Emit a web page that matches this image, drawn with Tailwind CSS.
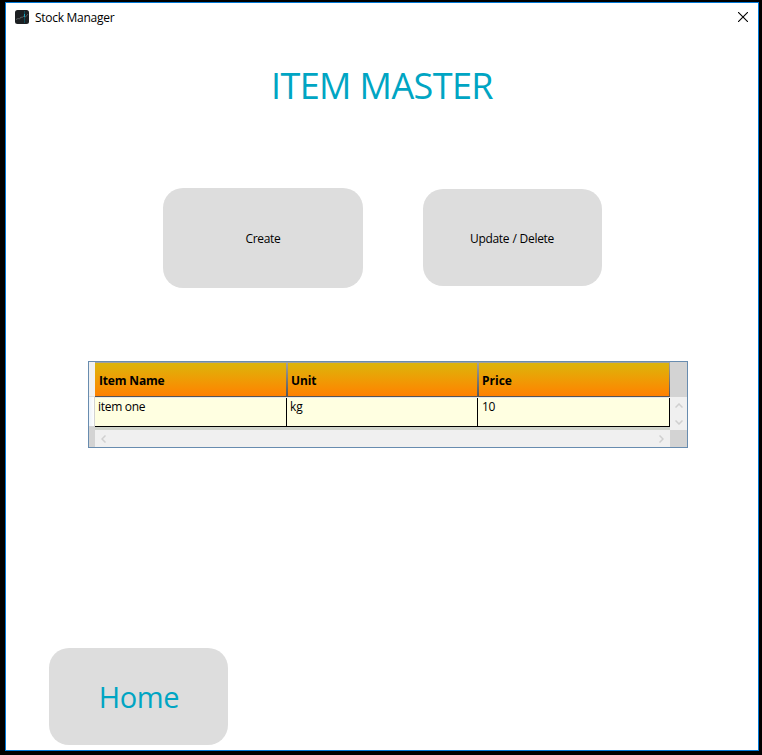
<!DOCTYPE html>
<html lang="en">
<head>
<meta charset="utf-8">
<title>Stock Manager</title>
<script src="https://cdn.jsdelivr.net/npm/@tailwindcss/browser@4"></script>
</head>
<body class="bg-black w-[762px] h-[755px] overflow-hidden pl-[5px] pt-[2px] font-['Open_Sans','Noto_Sans',sans-serif] text-black text-[12px]">
<div class="w-[754px] h-[749px] bg-white border border-[#0078d7] flex flex-col">
  <header class="h-[30px] flex items-center pl-[9px] pr-[10px] shrink-0">
    <svg class="w-[14px] h-[14px] mb-[2px]" viewBox="0 0 14 14"><rect width="14" height="14" rx="2.500" fill="#1c1f22"/><path d="M1 9.500l2-1 1.500.5L6 7l1 .5L9 6l1.500 1L13 4" fill="none" stroke="#62686c" stroke-width=".8"/><path d="M9.500 1v12" stroke="#0d5868" stroke-width=".8"/><path d="M9.500 4v3" stroke="#16a3bd"/></svg>
    <span class="ml-[6px] leading-4 tracking-[-0.28px]">Stock Manager</span>
    <svg class="ml-auto w-[10px] h-[10px] mb-[2px]" viewBox="0 0 10 10"><path d="M0 0l10 10M10 0L0 10" stroke="#000" stroke-width="1.100"/></svg>
  </header>
  <h1 class="mt-[28px] h-[49px] leading-[49px] ml-[265px] text-[36px] text-[#00a5c3] whitespace-nowrap tracking-[-0.6px]">ITEM MASTER</h1>
  <div class="mt-[78px] ml-[157px] flex items-start gap-[60px] shrink-0">
    <button class="w-[200px] h-[100px] rounded-[20px] bg-[#ddd] pt-[2px]"><span class="tracking-[-0.3px]">Create</span></button>
    <button class="mt-px w-[179px] h-[97px] rounded-[20px] bg-[#ddd] pt-[3px] pr-px"><span class="tracking-[-0.3px] [word-spacing:0.3px]">Update / Delete</span></button>
  </div>
  <div class="mt-[73px] ml-[82px] w-[600px] h-[87px] border border-[#688caf] bg-[#d3d3d3] flex shrink-0">
    <div class="w-[6px] shrink-0">
      <div class="h-[35px] bg-[#f0f0f0] border-b border-[#ddd]"></div>
      <div class="h-[30px] bg-linear-to-r from-[#edf3fa] to-white border-r border-b border-[#d3d3d3]"></div>
    </div>
    <div class="w-[575px] shrink-0">
      <div class="h-[35px] grid grid-cols-[193px_191px_191px] border-t border-t-[#a0a0a0] border-b border-b-[#555] bg-linear-to-b from-[#dbb40b] to-[#ff8000] font-bold leading-[33px]">
        <div class="flex justify-between pl-[4px]"><span class="pt-px tracking-[-0.17px]">Item Name</span><i class="w-[2px] bg-linear-to-b from-[#a0a0a0] to-[#555]"></i></div>
        <div class="flex justify-between pl-[3px]"><span class="pt-px tracking-[-0.1px]">Unit</span><i class="w-[2px] bg-linear-to-b from-[#a0a0a0] to-[#555]"></i></div>
        <div class="flex justify-between pl-[3px]"><span class="pt-px">Price</span><i class="w-px bg-linear-to-b from-[#a0a0a0] to-[#555]"></i></div>
      </div>
      <div class="h-[30px] grid grid-cols-[192px_191px_192px] border-t border-t-[#e8e8e8] border-b border-b-black bg-[#ffffe1] leading-[18px]">
        <div class="pl-[3px] border-r border-black tracking-[-0.3px]">item one</div>
        <div class="pl-[3px] border-r border-black">kg</div>
        <div class="pl-[4px] border-r border-black tracking-[-0.3px]">10</div>
      </div>
      <div class="h-[3px] bg-[#cfd3cb]"></div>
      <div class="h-[17px] bg-[#f0f0f0] flex items-center justify-between px-[6px]">
        <svg class="w-[5px] h-[8px]" viewBox="0 0 5 8"><path d="M4.500.5L1 4l3.500 3.500" fill="none" stroke="#d0d0d0" stroke-width="1.500"/></svg>
        <svg class="w-[5px] h-[8px]" viewBox="0 0 5 8"><path d="M.5.5L4 4 .5 7.500" fill="none" stroke="#d0d0d0" stroke-width="1.500"/></svg>
      </div>
    </div>
    <div class="w-[17px] pt-[35px]">
      <div class="h-[33px] bg-[#f0f0f0] flex flex-col items-center justify-between pt-[6px] pb-[5px]">
        <svg class="w-[8px] h-[5px]" viewBox="0 0 8 5"><path d="M.5 4.500L4 1l3.500 3.500" fill="none" stroke="#d0d0d0" stroke-width="1.500"/></svg>
        <svg class="w-[8px] h-[5px]" viewBox="0 0 8 5"><path d="M.5.5L4 4 7.500.5" fill="none" stroke="#d0d0d0" stroke-width="1.500"/></svg>
      </div>
    </div>
  </div>
  <button class="mt-[200px] ml-[43px] w-[179px] h-[97px] shrink-0 rounded-[20px] bg-[#ddd] text-[#00a5c3] text-[29px] leading-[40px] tracking-[-0.4px] pl-px">Home</button>
</div>
</body>
</html>
